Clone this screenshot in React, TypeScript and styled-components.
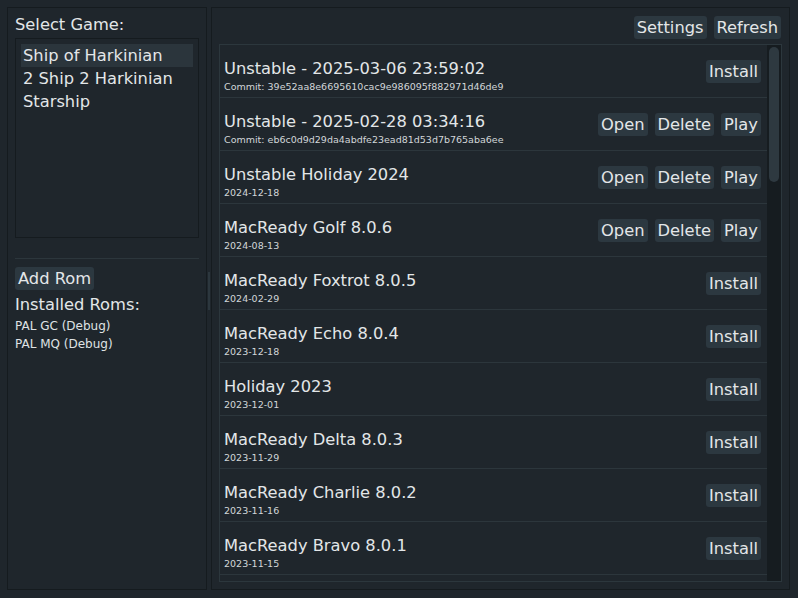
import React from "react";
import styled, { createGlobalStyle } from "styled-components";

const Global = createGlobalStyle`
  html, body { margin: 0; padding: 0; background: #1f262c; }
  body { font-family: "DejaVu Sans", "Liberation Sans", sans-serif; color: #e3e6e8; }
  * { box-sizing: border-box; }
`;

const Page = styled.div`
  width: 798px;
  height: 598px;
  padding: 7px 8px 8px 7px;
  display: flex;
  background: #1f262c;
`;

const Panel = styled.div<{ $width?: number }>`
  ${(p) => (p.$width ? `width: ${p.$width}px; flex: none;` : "flex: 1;")}
  border: 1px solid #151b1f;
  padding: 7px;
  display: flex;
  flex-direction: column;
  min-width: 0;
`;

const Splitter = styled.div`
  width: 4px;
  flex: none;
  display: flex;
  align-items: center;
  justify-content: center;
  padding-bottom: 16px;
`;

const Handle = styled.div`
  width: 2px;
  height: 38px;
  background: #2c373e;
`;

const Label = styled.div<{ $top?: number }>`
  font-size: 16.3px;
  line-height: 20px;
  height: 20px;
  margin-top: ${(p) => p.$top ?? 0}px;
  white-space: nowrap;
`;

const SmallLabel = styled.div<{ $top?: number }>`
  font-size: 12px;
  line-height: 18px;
  margin-top: ${(p) => p.$top ?? 0}px;
  color: #dfe2e4;
  white-space: nowrap;
`;

const GameList = styled.div`
  margin-top: 3px;
  height: 200px;
  border: 1px solid #151b1f;
  padding: 5px;
`;

const GameItem = styled.div<{ $selected?: boolean }>`
  height: 23px;
  line-height: 24px;
  padding-left: 2px;
  font-size: 16.3px;
  background: ${(p) => (p.$selected ? "#2b353c" : "transparent")};
  white-space: nowrap;
`;

const Separator = styled.div`
  height: 1px;
  background: #2c363c;
  margin: 20px 0 8px;
`;

const Button = styled.button`
  height: 23px;
  padding: 0 3px;
  border: none;
  border-radius: 3px;
  background: #2c3840;
  color: #e3e6e8;
  font-family: "DejaVu Sans", "Liberation Sans", sans-serif;
  font-size: 16.3px;
  line-height: 24px;
  white-space: nowrap;
  flex: none;
`;

const LeftButtonRow = styled.div`
  display: flex;
`;

const TopBar = styled.div`
  display: flex;
  justify-content: flex-end;
  gap: 7px;
  padding: 1px 1px 0 0;
  margin-bottom: 5px;
`;

const ListBox = styled.div`
  flex: 1;
  min-height: 0;
  border: 1px solid #2c373d;
  display: flex;
  overflow: hidden;
`;

const Rows = styled.div`
  flex: 1;
  min-width: 0;
  overflow: hidden;
`;

const Row = styled.div`
  height: 53px;
  border-bottom: 1px solid #2c363c;
  display: flex;
  align-items: center;
  padding: 0 6px 0 4px;
`;

const RowText = styled.div`
  flex: 1;
  min-width: 0;
  align-self: flex-start;
  padding-top: 14px;
`;

const Title = styled.div`
  font-size: 16.3px;
  line-height: 19px;
  white-space: nowrap;
`;

const Sub = styled.div`
  font-size: 9.5px;
  line-height: 12px;
  margin-top: 3px;
  color: #d2d6d9;
  white-space: nowrap;
`;

const Actions = styled.div`
  display: flex;
  gap: 7px;
  margin-top: 1px;
`;

const ScrollTrack = styled.div`
  width: 14px;
  flex: none;
  background: #161c20;
  padding: 2px 2px 0 2px;
`;

const Thumb = styled.div`
  height: 135px;
  border-radius: 5px;
  background: #2e3940;
`;

type Release = { title: string; sub: string; installed: boolean };

const releases: Release[] = [
  { title: "Unstable - 2025-03-06 23:59:02", sub: "Commit: 39e52aa8e6695610cac9e986095f882971d46de9", installed: false },
  { title: "Unstable - 2025-02-28 03:34:16", sub: "Commit: eb6c0d9d29da4abdfe23ead81d53d7b765aba6ee", installed: true },
  { title: "Unstable Holiday 2024", sub: "2024-12-18", installed: true },
  { title: "MacReady Golf 8.0.6", sub: "2024-08-13", installed: true },
  { title: "MacReady Foxtrot 8.0.5", sub: "2024-02-29", installed: false },
  { title: "MacReady Echo 8.0.4", sub: "2023-12-18", installed: false },
  { title: "Holiday 2023", sub: "2023-12-01", installed: false },
  { title: "MacReady Delta 8.0.3", sub: "2023-11-29", installed: false },
  { title: "MacReady Charlie 8.0.2", sub: "2023-11-16", installed: false },
  { title: "MacReady Bravo 8.0.1", sub: "2023-11-15", installed: false },
];

export default function App() {
  return (
    <>
      <Global />
      <Page>
        <Panel $width={200}>
          <Label>Select Game:</Label>
          <GameList>
            <GameItem $selected>Ship of Harkinian</GameItem>
            <GameItem>2 Ship 2 Harkinian</GameItem>
            <GameItem>Starship</GameItem>
          </GameList>
          <Separator />
          <LeftButtonRow>
            <Button>Add Rom</Button>
          </LeftButtonRow>
          <Label $top={5}>Installed Roms:</Label>
          <SmallLabel $top={2}>PAL GC (Debug)</SmallLabel>
          <SmallLabel>PAL MQ (Debug)</SmallLabel>
        </Panel>
        <Splitter>
          <Handle />
        </Splitter>
        <Panel>
          <TopBar>
            <Button>Settings</Button>
            <Button>Refresh</Button>
          </TopBar>
          <ListBox>
            <Rows>
              {releases.map((r) => (
                <Row key={r.title}>
                  <RowText>
                    <Title>{r.title}</Title>
                    <Sub>{r.sub}</Sub>
                  </RowText>
                  <Actions>
                    {r.installed ? (
                      <>
                        <Button>Open</Button>
                        <Button>Delete</Button>
                        <Button>Play</Button>
                      </>
                    ) : (
                      <Button>Install</Button>
                    )}
                  </Actions>
                </Row>
              ))}
            </Rows>
            <ScrollTrack>
              <Thumb />
            </ScrollTrack>
          </ListBox>
        </Panel>
      </Page>
    </>
  );
}
